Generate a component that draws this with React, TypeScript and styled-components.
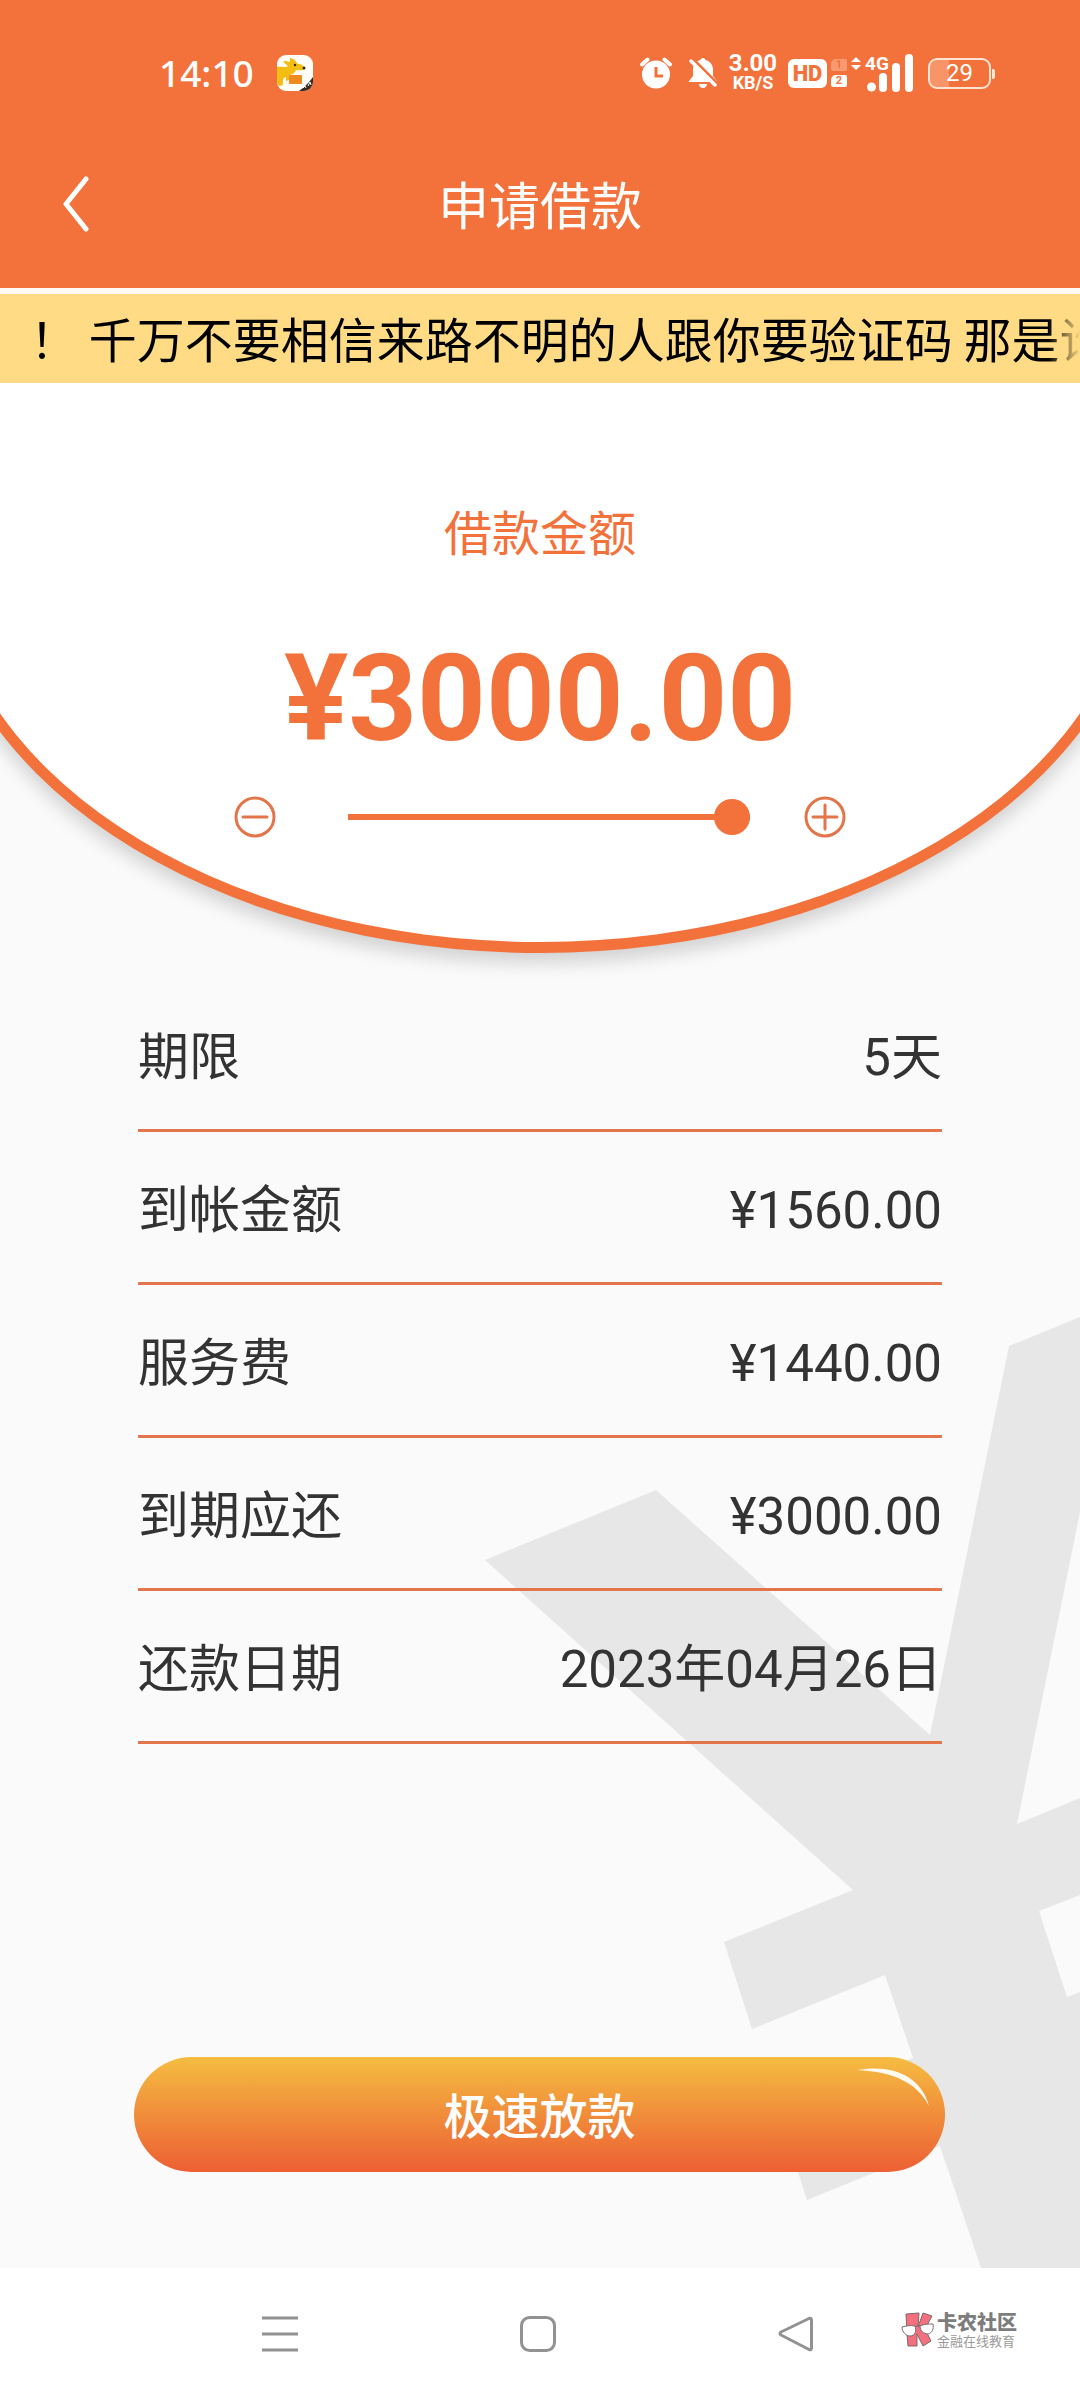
import React, { useState } from "react";
import styled, { createGlobalStyle } from "styled-components";

const ORANGE = "#f3723b";
const LINE = "#e2754a";

const GlobalStyle = createGlobalStyle`
  *, *::before, *::after { box-sizing: border-box; }
  body {
    margin: 0;
    background: #fafafa;
    color: #333333;
    font-family: Roboto, "Noto Sans CJK SC", sans-serif;
  }
  button { padding: 0; border: 0; background: none; font: inherit; color: inherit; cursor: pointer; }
  svg { display: block; }
`;

const Page = styled.div`
  display: flex;
  flex-direction: column;
  min-height: 100vh;
  overflow: hidden;
`;

const Header = styled.header`
  background: ${ORANGE};
  color: #ffffff;
  border-bottom: 6px solid #fffaf6;
`;

const StatusBar = styled.div`
  display: flex;
  align-items: center;
  justify-content: space-between;
  height: 124px;
  padding: 22px 89px 0 159px;
`;

const StatusGroup = styled.div<{ $gap: number }>`
  display: flex;
  align-items: center;
  gap: ${(p) => p.$gap}px;
`;

const Clock = styled.time`
  font: 500 37px/48px "Noto Sans", sans-serif;
`;

const NetSpeed = styled.div`
  display: flex;
  flex-direction: column;
  align-items: center;
  width: 50px;
  font-family: Roboto, sans-serif;
  font-weight: 700;
`;

const SpeedValue = styled.span`
  font-size: 24px;
  line-height: 20px;
`;

const SpeedUnit = styled.span`
  font-size: 18px;
  line-height: 20px;
`;

const HdBadge = styled.span`
  width: 39px;
  height: 29px;
  border-radius: 6px;
  background: #ffffff;
  color: ${ORANGE};
  font: 900 22px/29px Roboto, sans-serif;
  text-align: center;
`;

const SimStack = styled.div`
  display: flex;
  flex-direction: column;
  gap: 4px;
`;

const Sim = styled.span<{ $active: boolean }>`
  width: 16px;
  height: 12px;
  border-radius: 5px 2px 2px 2px;
  background: ${(p) => (p.$active ? "#ffffff" : "#f79a72")};
  color: ${ORANGE};
  font: 700 11px/12px Roboto, sans-serif;
  text-align: center;
`;

const Signal = styled.div`
  position: relative;
  width: 62px;
  height: 38px;
`;

const NetType = styled.span`
  position: absolute;
  left: 14px;
  top: 0;
  font: 700 19px/20px Roboto, sans-serif;
`;

const Battery = styled.div`
  position: relative;
  width: 63px;
  height: 31px;
  border: 2px solid #ffe3d3;
  border-radius: 9px;
  background: linear-gradient(90deg, #f79468 32%, transparent 32%);
  font: 400 24px/27px Roboto, sans-serif;
  text-align: center;

  &::after {
    content: "";
    position: absolute;
    right: -6px;
    top: 9px;
    width: 3px;
    height: 10px;
    border-radius: 0 2px 2px 0;
    background: #ffe3d3;
  }
`;

const TitleBar = styled.div`
  display: grid;
  grid-template-columns: 100px 1fr 100px;
  align-items: center;
  height: 164px;
`;

const BackButton = styled.button`
  display: flex;
  justify-content: flex-end;
  align-items: center;
  height: 100px;
  padding: 0 11px 4px 0;
`;

const Title = styled.h1`
  margin: 0;
  padding-top: 4px;
  font-size: 51px;
  line-height: 72px;
  font-weight: 400;
  text-align: center;
`;

const Notice = styled.div`
  height: 89px;
  padding-left: 30px;
  overflow: hidden;
  background: #fedb84;
  color: #000000;
`;

const NoticeText = styled.p`
  margin: 0;
  font-size: 48px;
  line-height: 86px;
  font-family: "Noto Sans CJK SC", sans-serif;
  white-space: nowrap;
  overflow: hidden;
  mask-image: linear-gradient(90deg, #000 calc(100% - 32px), transparent);
`;

const Main = styled.main`
  position: relative;
  flex: 1;
  display: flex;
  flex-direction: column;
`;

const Watermark = styled.svg`
  position: absolute;
  right: 0;
  bottom: 0;
  width: 595px;
  height: 951px;
`;

const AmountPanel = styled.section`
  position: relative;
  display: flex;
  flex-direction: column;
  align-items: center;
  padding: 116px 0 141px;
  overflow: hidden;
  color: ${ORANGE};

  &::before {
    content: "";
    position: absolute;
    left: -6%;
    right: -6%;
    top: -40px;
    bottom: 26px;
    border: 11px solid ${ORANGE};
    border-radius: 0 0 50% 50% / 0 0 403px 403px;
    background: #ffffff;
    box-shadow: 0 10px 18px rgba(0, 0, 0, 0.16);
  }

  & > * { position: relative; }
`;

const AmountLabel = styled.label`
  font-size: 48px;
  line-height: 72px;
`;

const Amount = styled.output`
  margin-top: 68px;
  font-size: 120px;
  line-height: 120px;
  font-weight: 700;
`;

const SliderRow = styled.div`
  display: flex;
  align-items: center;
  margin-top: 37px;
`;

const StepButton = styled.button`
  width: 42px;
  height: 42px;
`;

const Slider = styled.input`
  appearance: none;
  width: 402px;
  height: 36px;
  margin: 0 54px 0 72px;
  background: linear-gradient(${ORANGE}, ${ORANGE}) center / 100% 6px no-repeat;

  &::-webkit-slider-thumb {
    appearance: none;
    width: 36px;
    height: 36px;
    border-radius: 50%;
    background: ${ORANGE};
  }
`;

const Details = styled.dl`
  position: relative;
  margin: 0 138px;
`;

const DetailRow = styled.div`
  display: flex;
  align-items: center;
  justify-content: space-between;
  height: 153px;
  padding-top: 8px;
  border-bottom: 3px solid ${LINE};
  font-size: 51px;
  line-height: 72px;

  dt, dd { margin: 0; }
`;

const Action = styled.div`
  position: relative;
  display: flex;
  margin-top: auto;
  padding: 0 135px 96px 134px;
`;

const SubmitButton = styled.button`
  position: relative;
  flex: 1;
  height: 115px;
  padding-bottom: 4px;
  border-radius: 58px;
  background: linear-gradient(#f5bd41, #f08b3a 52%, #ed5f33);
  color: #ffffff;
  font-size: 48px;
  font-weight: 500;
`;

const Shine = styled.svg`
  position: absolute;
  right: 14px;
  top: 10px;
  width: 74px;
  height: 42px;
`;

const NavBar = styled.nav`
  position: relative;
  display: flex;
  justify-content: center;
  gap: 222px;
  height: 132px;
  padding: 48px 4px 0 0;
  background: #ffffff;
`;

const NavButton = styled.button`
  width: 36px;
  height: 36px;
`;

const Brand = styled.div`
  position: absolute;
  right: 63px;
  top: 43px;
  display: flex;
  align-items: center;
  gap: 2px;
  font-family: "Noto Sans CJK SC", sans-serif;
`;

const BrandText = styled.div`
  display: flex;
  flex-direction: column;
`;

const BrandName = styled.span`
  font-size: 20px;
  line-height: 22px;
  font-weight: 900;
  color: #7d7d7d;
`;

const BrandSlogan = styled.span`
  font-size: 13px;
  line-height: 16px;
  color: #9a9a9a;
`;

const AlarmIcon = () => (
  <svg width="32" height="32" viewBox="0 0 32 32">
    <circle cx="16" cy="17.5" r="14" fill="#fff" />
    <path d="M2 7.500L7.500 2.500M24.500 2.500L30 7.500" stroke="#fff" strokeWidth="4" strokeLinecap="round" />
    <path d="M16 10v9h7" stroke={ORANGE} strokeWidth="3" fill="none" />
  </svg>
);

const BellOffIcon = () => (
  <svg width="30" height="32" viewBox="0 0 30 32">
    <path d="M15 1c-1.500 0-2.500 1-2.500 2-4.500 1-7.500 5-7.500 9.500V19l-4 5v1h28v-1l-4-5v-6.500C25 8 22 4 17.500 3c0-1-1-2-2.500-2z" fill="#fff" />
    <path d="M11 27h8c0 2-1.500 4-4 4s-4-2-4-4z" fill="#fff" />
    <path d="M4.500 1.500L30 27" stroke={ORANGE} strokeWidth="3" />
    <path d="M3 4L27 28" stroke="#fff" strokeWidth="3.500" strokeLinecap="round" />
  </svg>
);

const AppBadgeIcon = () => (
  <svg width="36" height="36" viewBox="0 0 36 36">
    <defs>
      <clipPath id="badge"><rect width="36" height="36" rx="9" /></clipPath>
    </defs>
    <g clipPath="url(#badge)">
      <rect width="36" height="36" fill="#fffdf8" />
      <path d="M0 12c4-1 8 1 11-1l-5-4c3-2 5 0 7 0l0-4c4 0 6 4 8 6 4 0 6 2 7 5-3 2-6 1-9 1-1 3-3 4-6 5l-1 5-3 1v-4c-4 1-3 4-3 8l-4 1-2-3z" fill="#f4bd12" />
      <rect x="12" y="20" width="13" height="9" rx="1" fill="#f08a1e" />
      <circle cx="18" cy="10" r="1.200" fill="#3a2b20" />
      <circle cx="27" cy="13" r="1.500" fill="#3a2b20" />
      <path d="M36 22v14H22c4-3 10-8 14-14z" fill="#3b2a22" />
      <path d="M26 33l2-2 1 2M31 31l2-4 1 3" stroke="#fff" strokeWidth="1" fill="none" />
    </g>
  </svg>
);

const SignalBars = () => (
  <svg width="62" height="38" viewBox="0 0 62 38">
    <path d="M0 8L5 3l5 5zM0 11h10l-5 5z" fill="#fff" />
    <circle cx="20.500" cy="33" r="4.500" fill="#fff" />
    <rect x="28" y="19" width="8" height="19" rx="4" fill="#fff" />
    <rect x="41" y="9" width="8" height="29" rx="4" fill="#fff" />
    <rect x="54" y="0" width="8" height="38" rx="4" fill="#fff" />
  </svg>
);

const StepIcon = ({ plus }: { plus?: boolean }) => (
  <svg width="42" height="42" viewBox="0 0 42 42" fill="none" stroke={LINE} strokeWidth="3">
    <circle cx="21" cy="21" r="19" />
    <path d={plus ? "M9 21h24M21 9v24" : "M9 21h24"} strokeLinecap="round" />
  </svg>
);

const BrandMark = () => (
  <svg width="34" height="36" viewBox="0 0 34 36" stroke="#7b6a6a" strokeWidth="1">
    <path d="M5 2l13-1-1 14 5-14 9 3-7 13 6 12-8 5-6-12v12H7l-1-12z" fill="#f4707e" />
    <path d="M1 15c4-1 8-2 13-1 2 5 0 10-5 10-4 0-8-4-8-9zM19 14c4-2 8-2 13-2 1 5-1 9-5 10-4 0-8-3-8-8z" fill="#fff" />
    <path d="M14 15c2-2 3-2 5-1" fill="none" />
  </svg>
);

const STEP = 500;
const MIN = 500;
const MAX = 3000;

const DETAILS = [
  { name: "期限", value: "5天" },
  { name: "到帐金额", value: "¥1560.00" },
  { name: "服务费", value: "¥1440.00" },
  { name: "到期应还", value: "¥3000.00" },
  { name: "还款日期", value: "2023年04月26日" },
];

export default function App() {
  const [amount, setAmount] = useState(MAX);
  const change = (value: number) => setAmount(Math.min(MAX, Math.max(MIN, value)));

  return (
    <Page>
      <GlobalStyle />
      <Header>
        <StatusBar>
          <StatusGroup $gap={23}>
            <Clock>14:10</Clock>
            <AppBadgeIcon />
          </StatusGroup>
          <StatusGroup $gap={15}>
            <StatusGroup $gap={10}>
              <StatusGroup $gap={16}>
                <AlarmIcon />
                <BellOffIcon />
              </StatusGroup>
              <NetSpeed>
                <SpeedValue>3.00</SpeedValue>
                <SpeedUnit>KB/S</SpeedUnit>
              </NetSpeed>
              <StatusGroup $gap={4}>
                <HdBadge>HD</HdBadge>
                <SimStack>
                  <Sim $active={false}>1</Sim>
                  <Sim $active>2</Sim>
                </SimStack>
                <Signal>
                  <SignalBars />
                  <NetType>4G</NetType>
                </Signal>
              </StatusGroup>
            </StatusGroup>
            <Battery>29</Battery>
          </StatusGroup>
        </StatusBar>
        <TitleBar>
          <BackButton aria-label="返回">
            <svg width="26" height="56" viewBox="0 0 26 56" fill="none" stroke="#fff" strokeWidth="5" strokeLinecap="round" strokeLinejoin="round">
              <path d="M23 3L3 28l20 25" />
            </svg>
          </BackButton>
          <Title>申请借款</Title>
        </TitleBar>
      </Header>

      <Notice>
        <NoticeText>！ 千万不要相信来路不明的人跟你要验证码 那是诈骗</NoticeText>
      </Notice>

      <Main>
        <Watermark viewBox="485 1317 595 951" aria-hidden="true">
          <path
            fill="#e7e7e7"
            d="M485 1560L656 1490L930 1735L1009 1346L1080 1317V1512L1017 1824L1080 1798V1895L1039 1911L1067 1997L1080 1992V2268H981L940 2146L807 2200L779 2113L913 2058L885 1975L752 2029L724 1942L853 1890Z"
          />
        </Watermark>

        <AmountPanel>
          <AmountLabel htmlFor="amount">借款金额</AmountLabel>
          <Amount htmlFor="amount">¥{amount.toFixed(2)}</Amount>
          <SliderRow>
            <StepButton aria-label="减少" onClick={() => change(amount - STEP)}>
              <StepIcon />
            </StepButton>
            <Slider
              id="amount"
              type="range"
              min={MIN}
              max={MAX}
              step={STEP}
              value={amount}
              onChange={(e) => change(Number(e.target.value))}
            />
            <StepButton aria-label="增加" onClick={() => change(amount + STEP)}>
              <StepIcon plus />
            </StepButton>
          </SliderRow>
        </AmountPanel>

        <Details>
          {DETAILS.map((d) => (
            <DetailRow key={d.name}>
              <dt>{d.name}</dt>
              <dd>{d.value}</dd>
            </DetailRow>
          ))}
        </Details>

        <Action>
          <SubmitButton>
            极速放款
            <Shine viewBox="0 0 74 42" aria-hidden="true">
              <path d="M0 3C34-3 64 8 72 39C60 16 38 5 0 3Z" fill="#fffaf0" />
            </Shine>
          </SubmitButton>
        </Action>
      </Main>

      <NavBar>
        <NavButton aria-label="菜单">
          <svg width="36" height="36" viewBox="0 0 36 36" stroke="#929292" strokeWidth="3">
            <path d="M0 2h36M0 18h36M0 34h36" />
          </svg>
        </NavButton>
        <NavButton aria-label="主页">
          <svg width="36" height="36" viewBox="0 0 36 36" fill="none" stroke="#929292" strokeWidth="3">
            <rect x="1.500" y="1.500" width="33" height="33" rx="8" />
          </svg>
        </NavButton>
        <NavButton aria-label="后退">
          <svg width="36" height="36" viewBox="0 0 36 36" fill="none" stroke="#929292" strokeWidth="3" strokeLinejoin="round">
            <path d="M31 2.500L3 16q-2 1.500 0 3L31 33.500q2.500 1 2.500-2v-27q0-3-2.500-2z" />
          </svg>
        </NavButton>
        <Brand>
          <BrandMark />
          <BrandText>
            <BrandName>卡农社区</BrandName>
            <BrandSlogan>金融在线教育</BrandSlogan>
          </BrandText>
        </Brand>
      </NavBar>
    </Page>
  );
}
